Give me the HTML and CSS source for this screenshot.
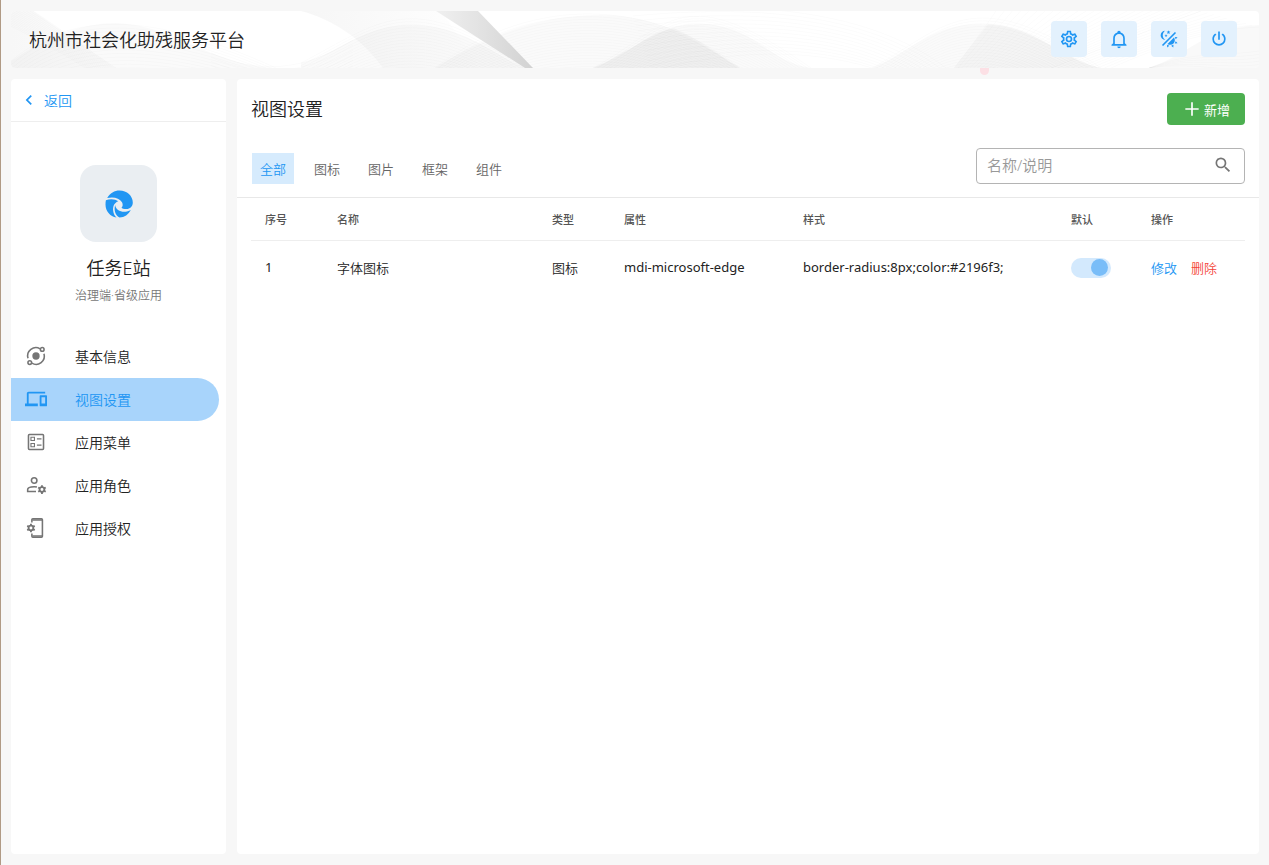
FILE: index.html
```html
<!DOCTYPE html>
<html lang="zh-CN">
<head>
<meta charset="utf-8">
<title>杭州市社会化助残服务平台</title>
<link rel="stylesheet" href="styles.css">
</head>
<body>
<div class="app">
  <header class="topbar">
    <svg class="waves" viewBox="0 0 1248 57" preserveAspectRatio="xMidYMid slice" aria-hidden="true">
      <defs>
        <linearGradient id="beam" x1="0" y1="0" x2="1" y2="0"><stop offset="0" stop-color="#f0f0f0"/><stop offset="1" stop-color="#d2d2d2"/></linearGradient>
        <linearGradient id="fade" x1="0" y1="0" x2="1" y2="0"><stop offset="0" stop-color="#f6f6f6"/><stop offset="1" stop-color="#fff"/></linearGradient>
        <linearGradient id="left" x1="0" y1="0" x2="1" y2="0"><stop offset="0" stop-color="#f7f7f7"/><stop offset="1" stop-color="#fdfdfd"/></linearGradient>
      </defs>
      <path fill="url(#left)" d="M0 0H22L105 57H0Z"/>
      <path fill="url(#fade)" d="M290 0C320 8 350 26 372 57H470L430 0Z"/>
      <g class="fills">
        <path d="M0 50Q55 12 105 12C165 14 200 55 265 57H0Z"/>
        <path d="M290 52C325 44 350 14 400 14C455 14 480 44 516 57H290Z"/>
        <path d="M424 57C480 22 530 4 590 4C650 4 690 32 729 57Z"/>
        <path d="M582 57C630 38 640 13 690 13C745 14 755 50 800 57Z"/>
        <path class="deep" d="M582 57C620 40 635 24 663 17C690 29 708 44 729 57Z"/>
        <path d="M861 57C905 38 920 13 970 13C1025 14 1050 48 1090 57Z"/>
        <path class="deep" d="M943 57L977 13C1025 15 1050 48 1090 57Z"/>
        <path class="deep" d="M1138 57C1175 45 1195 16 1248 14V57Z"/>
      </g>
      <g id="wave-lines" class="lines"></g>
      <path fill="url(#beam)" d="M425 0H467L522 57H514Z"/>
    </svg>
    <h1 class="brand">杭州市社会化助残服务平台</h1>
    <div class="tools">
      <button class="tool" type="button" aria-label="设置"><svg viewBox="0 0 24 24"><path d="M12,8A4,4 0 0,1 16,12A4,4 0 0,1 12,16A4,4 0 0,1 8,12A4,4 0 0,1 12,8M12,10A2,2 0 0,0 10,12A2,2 0 0,0 12,14A2,2 0 0,0 14,12A2,2 0 0,0 12,10M10,22C9.75,22 9.54,21.82 9.5,21.58L9.13,18.93C8.5,18.68 7.96,18.34 7.44,17.94L4.95,18.95C4.73,19.03 4.46,18.95 4.34,18.73L2.34,15.27C2.21,15.05 2.27,14.78 2.46,14.63L4.57,12.97L4.5,12L4.57,11L2.46,9.37C2.27,9.22 2.21,8.95 2.34,8.73L4.34,5.27C4.46,5.05 4.73,4.96 4.95,5.05L7.44,6.05C7.96,5.66 8.5,5.32 9.13,5.07L9.5,2.42C9.54,2.18 9.75,2 10,2H14C14.25,2 14.46,2.18 14.5,2.42L14.87,5.07C15.5,5.32 16.04,5.66 16.56,6.05L19.05,5.05C19.27,4.96 19.54,5.05 19.66,5.27L21.66,8.73C21.79,8.95 21.73,9.22 21.54,9.37L19.43,11L19.5,12L19.43,13L21.54,14.63C21.73,14.78 21.79,15.05 21.66,15.27L19.66,18.73C19.54,18.95 19.27,19.04 19.05,18.95L16.56,17.95C16.04,18.34 15.5,18.68 14.87,18.93L14.5,21.58C14.46,21.82 14.25,22 14,22H10M11.25,4L10.88,6.61C9.68,6.86 8.62,7.5 7.85,8.39L5.44,7.35L4.69,8.65L6.8,10.2C6.4,11.37 6.4,12.64 6.8,13.8L4.68,15.36L5.43,16.66L7.86,15.62C8.63,16.5 9.68,17.14 10.87,17.38L11.24,20H12.76L13.13,17.39C14.32,17.14 15.37,16.5 16.14,15.62L18.57,16.66L19.32,15.36L17.2,13.81C17.6,12.64 17.6,11.37 17.2,10.2L19.31,8.65L18.56,7.35L16.15,8.39C15.38,7.5 14.32,6.86 13.12,6.62L12.75,4H11.25Z"/></svg></button>
      <button class="tool" type="button" aria-label="通知"><svg viewBox="0 0 24 24"><path d="M10 21H14C14 22.1 13.1 23 12 23S10 22.1 10 21M21 19V20H3V19L5 17V11C5 7.9 7 5.2 10 4.3V4C10 2.9 10.9 2 12 2S14 2.9 14 4V4.3C17 5.2 19 7.9 19 11V17L21 19M17 11C17 8.2 14.8 6 12 6S7 8.2 7 11V18H17V11Z"/></svg></button>
      <button class="tool" type="button" aria-label="主题"><svg viewBox="0 0 24 24"><path d="M7.5,2C5.71,3.15 4.5,5.18 4.5,7.5C4.5,9.82 5.71,11.85 7.53,13C4.46,13 2,10.54 2,7.5A5.5,5.5 0 0,1 7.5,2M19.07,3.5L20.5,4.93L4.93,20.5L3.5,19.07L19.07,3.5M12.89,5.93L11.41,5L9.97,6L10.39,4.3L9,3.24L10.75,3.12L11.33,1.47L12,3.1L13.73,3.13L12.38,4.26L12.89,5.93M9.59,9.54L8.43,8.81L7.31,9.59L7.65,8.27L6.56,7.44L7.92,7.35L8.37,6.06L8.88,7.33L10.24,7.36L9.19,8.23L9.59,9.54M19,13.5A5.5,5.5 0 0,1 13.5,19C12.28,19 11.15,18.6 10.24,17.93L17.93,10.24C18.6,11.15 19,12.28 19,13.5M14.6,20.08L17.37,18.93L17.13,22.28L14.6,20.08M18.93,17.38L20.08,14.61L22.28,17.15L18.93,17.38M20.08,12.42L18.94,9.64L22.28,9.88L20.08,12.42M9.63,18.93L12.4,20.08L9.87,22.27L9.63,18.93Z"/></svg></button>
      <button class="tool" type="button" aria-label="退出"><svg viewBox="0 0 24 24"><path d="M16.56,5.44L15.11,6.89C16.84,7.94 18,9.83 18,12A6,6 0 0,1 12,18A6,6 0 0,1 6,12C6,9.83 7.16,7.94 8.88,6.88L7.44,5.44C5.36,6.88 4,9.28 4,12A8,8 0 0,0 12,20A8,8 0 0,0 20,12C20,9.28 18.64,6.88 16.56,5.44M13,3H11V13H13"/></svg></button>
    </div>
    <span class="marker"></span>
  </header>

  <div class="columns">
    <aside class="sidebar">
      <a class="back" href="#"><svg viewBox="0 0 24 24"><path d="M15.41,16.58L10.83,12L15.41,7.41L14,6L8,12L14,18L15.41,16.58Z"/></svg>返回</a>
      <section class="profile">
        <div class="logo">
          <svg viewBox="0 0 28 28"><path d="M2.200 8C5 3 9.500 .5 14.500 .5C22 .5 27.800 6 27.800 12.500C27.800 16.500 25 19 21.500 19C18.800 19 17 18.500 16.500 17.700C18 16.500 18 14 17 12.300C14.500 8 8.500 6.500 2.200 8ZM.9 10.200C5 8.600 10.500 8.900 13.300 11.300C9.500 12.500 7.500 16.500 8.200 21C8.600 24 9.700 26 11.500 27.500C5 26.500 .5 21 .5 14.500C.5 13 .6 11.500 .9 10.200ZM10.200 15C10.500 19.500 15.500 22.300 20.500 21.700C22.500 21.500 24.500 20.700 25.800 20C23.500 24.500 19.500 27.500 14.500 27.500C10 25.500 8.800 19.500 10.200 15Z"/></svg>
        </div>
        <h2 class="app-name">任务E站</h2>
        <p class="app-kind">治理端·省级应用</p>
      </section>
      <nav class="menu">
        <a class="item" href="#"><svg viewBox="0 0 24 24"><circle cx="12" cy="12" r="4"/><g class="stroke"><path d="M16.500 4.200A9 9 0 0 0 3.300 14.500M7.500 19.800A9 9 0 0 0 20.700 9.500"/><circle cx="18.800" cy="4.800" r="2"/><circle cx="5.200" cy="19.200" r="2"/></g></svg>基本信息</a>
        <a class="item active" href="#" aria-current="page"><svg viewBox="0 0 24 24"><path d="M4 6h18V4H4c-1.100 0-2 .9-2 2v11H0v3h14v-3H4V6zm19 2h-6c-.55 0-1 .45-1 1v10c0 .55.45 1 1 1h6c.55 0 1-.45 1-1V9c0-.55-.45-1-1-1zm-1 9h-4v-7h4v7z"/></svg>视图设置</a>
        <a class="item" href="#"><svg viewBox="0 0 24 24"><g class="stroke"><rect x="3.800" y="3.800" width="16.400" height="16.400" rx="1"/></g><g class="thin"><path d="M6.500 6.800h3.800v3.600h-3.800zM6.500 13.600h3.800v3.600h-3.800zM13 8.600h5M13 15.400h5"/></g></svg>应用菜单</a>
        <a class="item" href="#"><svg viewBox="0 0 24 24"><g class="stroke"><circle cx="10" cy="7" r="3"/><path d="M12 19H2.900V17C2.900 14.500 7.500 13.900 10 13.900Q11.500 13.900 13 14.300"/></g><g class="gear"><circle cx="18.500" cy="17" r="2.600"/><path d="M18.500 12.300v2M18.500 19.700v2M14.400 14.700l1.800 1M20.800 18.300l1.800 1M14.400 19.300l1.800-1M20.800 15.700l1.800-1"/></g></svg>应用角色</a>
        <a class="item" href="#"><svg viewBox="0 0 24 24"><g class="stroke"><path d="M7.500 6V3Q7.500 2 8.500 2H18Q19 2 19 3V21Q19 22 18 22H8.500Q7.500 22 7.500 21V18"/><path d="M8 3.300H19M8 20.700H19"/></g><g class="gear"><circle cx="6.500" cy="12" r="2.600"/><path d="M6.500 7.300v2M6.500 14.700v2M2.400 9.700l1.800 1M8.800 13.300l1.800 1M2.400 14.300l1.800-1M8.800 10.700l1.800-1"/></g></svg>应用授权</a>
      </nav>
    </aside>

    <main class="panel">
      <div class="panel-head">
        <h2 class="title">视图设置</h2>
        <button class="add" type="button"><svg viewBox="0 0 24 24"><path d="M20,13H13V20H11V13H4V11H11V4H13V11H20V13Z"/></svg>新增</button>
      </div>
      <div class="filters">
        <div class="tabs">
          <button class="tab selected" type="button">全部</button>
          <button class="tab" type="button">图标</button>
          <button class="tab" type="button">图片</button>
          <button class="tab" type="button">框架</button>
          <button class="tab" type="button">组件</button>
        </div>
        <label class="search">
          <input type="text" placeholder="名称/说明" aria-label="名称/说明">
          <svg viewBox="0 0 24 24"><path d="M9.500,3A6.500,6.500 0 0,1 16,9.500C16,11.110 15.410,12.590 14.440,13.730L14.710,14H15.500L20.500,19L19,20.500L14,15.500V14.710L13.730,14.440C12.590,15.410 11.110,16 9.500,16A6.500,6.500 0 0,1 3,9.500A6.500,6.500 0 0,1 9.500,3M9.500,5C7,5 5,7 5,9.500C5,12 7,14 9.500,14C12,14 14,12 14,9.500C14,7 12,5 9.500,5Z"/></svg>
        </label>
      </div>
      <div class="table-wrap">
        <table class="grid">
          <colgroup><col class="c-no"><col class="c-name"><col class="c-type"><col class="c-attr"><col class="c-style"><col class="c-default"><col class="c-ops"></colgroup>
          <thead><tr><th>序号</th><th>名称</th><th>类型</th><th>属性</th><th>样式</th><th>默认</th><th>操作</th></tr></thead>
          <tbody><tr>
            <td class="latin">1</td><td>字体图标</td><td>图标</td><td class="latin">mdi-microsoft-edge</td><td class="latin">border-radius:8px;color:#2196f3;</td>
            <td><input class="switch" type="checkbox" role="switch" aria-label="默认" checked></td>
            <td><span class="ops"><a class="edit" href="#">修改</a><a class="delete" href="#">删除</a></span></td>
          </tr></tbody>
        </table>
      </div>
    </main>
  </div>
</div>
<script src="waves.js"></script>
</body>
</html>
```
FILE: styles.css
```css
* { box-sizing: border-box; }
body {
  margin: 0;
  background: #f7f7f7;
  color: #222;
  font-family: "Noto Sans", "Noto Sans CJK SC", sans-serif;
  font-size: 13px;
  font-weight: 350;
}
h1, h2, p { margin: 0; font-weight: 350; }
a { text-decoration: none; color: inherit; }
button { border: 0; font: inherit; cursor: pointer; }
svg { fill: currentColor; flex: none; }

.app {
  display: flex;
  flex-direction: column;
  gap: 11px;
  min-height: 100vh;
  padding: 11px 10px;
  border-left: 1px solid #b09a85;
}

.topbar {
  position: relative;
  display: flex;
  align-items: center;
  justify-content: space-between;
  min-height: 57px;
  padding: 0 22px 0 18px;
  border-radius: 4px;
  background: #fff;
}
.waves { position: absolute; inset: 0; width: 100%; height: 100%; border-radius: 4px; }
.fills path { fill: #000; fill-opacity: .02; }
.fills .deep { fill-opacity: .022; }
.lines { fill: none; stroke: #000; stroke-opacity: .028; stroke-width: .7; }
.brand { position: relative; font-size: 18px; line-height: 26px; }
.tools { position: relative; display: flex; gap: 14px; padding-bottom: 1px; }
.tool {
  display: grid;
  place-items: center;
  width: 36px;
  height: 36px;
  padding: 0;
  border-radius: 4px;
  background: #e3f1fd;
  color: #2196f3;
}
.tool svg { width: 20px; height: 20px; }
.marker {
  position: absolute;
  top: 100%;
  right: 270px;
  width: 9px;
  height: 7px;
  border-radius: 0 0 5px 5px;
  background: #fce0e5;
}

.columns { display: flex; flex: 1; gap: 11px; }
.sidebar { flex: none; width: 215px; border-radius: 4px; background: #fff; }
.back {
  display: flex;
  align-items: center;
  gap: 5px;
  height: 43px;
  padding-left: 8px;
  border-bottom: 1px solid #eee;
  color: #2196f3;
  font-size: 14px;
}
.back svg { width: 20px; height: 20px; }
.profile { display: flex; flex-direction: column; align-items: center; padding: 43px 0 30px; }
.logo {
  display: grid;
  place-items: center;
  width: 77px;
  height: 77px;
  border-radius: 16px;
  background: #eaeef2;
  color: #2196f3;
}
.logo svg { width: 28px; height: 28px; }
.app-name { margin-top: 12px; font-size: 18px; line-height: 28px; }
.app-kind { margin-top: 5px; font-size: 12px; line-height: 18px; color: #777; }
.item {
  display: flex;
  align-items: center;
  gap: 28px;
  height: 43px;
  margin-right: 7px;
  padding: 0 0 2px 14px;
  border-radius: 0 22px 22px 0;
  font-size: 14px;
}
.item svg { width: 22px; height: 22px; color: #757575; }
.item.active { background: #a8d4fb; color: #2196f3; }
.item.active svg { color: inherit; }
.stroke { fill: none; stroke: currentColor; stroke-width: 1.7; }
.thin { fill: none; stroke: currentColor; stroke-width: 1.2; }
.gear { fill: none; stroke: currentColor; stroke-width: 2; }

.panel { flex: 1; min-width: 0; border-radius: 4px; background: #fff; }
.panel-head {
  display: flex;
  align-items: center;
  justify-content: space-between;
  padding: 14px 14px 0;
}
.title { font-size: 18px; line-height: 32px; }
.add {
  display: flex;
  align-items: center;
  gap: 2px;
  height: 32px;
  padding: 0 15px;
  border-radius: 4px;
  background: #4caf50;
  color: #fff;
  font-size: 13px;
  font-weight: 400;
}
.add svg { width: 20px; height: 20px; }
.filters {
  display: flex;
  align-items: center;
  justify-content: space-between;
  padding: 23px 14px 13px;
  border-bottom: 1px solid #e8e8e8;
}
.tabs { display: flex; gap: 12px; padding: 4px 1px 0; }
.tab { height: 31px; padding: 0 8px; background: none; color: #666; font-size: 13px; }
.tab.selected { background: #d6ebfd; color: #2196f3; }
.search {
  display: flex;
  align-items: center;
  width: 269px;
  height: 36px;
  padding: 0 11px 2px 10px;
  border: 1px solid #b4b4b4;
  border-radius: 4px;
  color: #757575;
}
.search input { flex: 1; min-width: 0; padding: 0; border: 0; outline: 0; background: none; font: inherit; font-size: 15px; }
.search input::placeholder { color: #999; opacity: 1; }
.search svg { width: 20px; height: 20px; }

.table-wrap { padding: 0 14px; }
.grid { width: 100%; table-layout: fixed; border-collapse: collapse; text-align: left; }
.grid th, .grid td { padding: 0 14px; }
.grid th { height: 42px; border-bottom: 1px solid #eee; font-size: 11px; font-weight: 500; color: #555; }
.grid td { height: 54px; font-size: 13px; white-space: nowrap; }
.grid .latin { font-weight: 400; }
.c-no, .c-type { width: 72px; }
.c-name { width: 215px; }
.c-attr { width: 179px; }
.c-style { width: 268px; }
.c-default { width: 80px; }
.switch {
  appearance: none;
  display: inline-grid;
  align-items: center;
  justify-items: end;
  width: 40px;
  height: 20px;
  margin: 0;
  padding: 0 3px;
  border-radius: 10px;
  background: #d3e9fd;
  vertical-align: middle;
}
.switch::before { content: ""; width: 17px; height: 17px; border-radius: 50%; background: #79bdf8; }
.switch:not(:checked) { justify-items: start; }
.ops { display: flex; gap: 14px; }
.edit { color: #2196f3; }
.delete { color: #f44336; }
```
FILE: waves.js
```js
const group = document.getElementById("wave-lines");

// Each family blends from one cubic curve to another: [x0,y0, x1,y1, x2,y2, x3,y3].
const families = [
  [[-30, 0, 20, 25, 60, 45, 100, 75], [22, 0, 45, 14, 75, 38, 105, 57], 16],
  [[0, 50, 60, 0, 140, 0, 265, 57], [0, 100, 60, 50, 140, 50, 265, 85], 14],
  [[200, 42, 245, 62, 290, 62, 342, 29], [200, 80, 245, 95, 290, 95, 342, 75], 10],
  [[290, 52, 370, 10, 400, -24, 516, 57], [290, 100, 370, 60, 400, 40, 516, 100], 19],
  [[424, 57, 510, -10, 630, -20, 729, 57], [424, 110, 510, 50, 630, 40, 729, 110], 22],
  [[582, 57, 660, 14, 670, -34, 800, 57], [582, 110, 660, 64, 670, 20, 800, 110], 22],
  [[620, 0, 720, -8, 850, -8, 935, 57], [640, 60, 720, 38, 800, 38, 861, 57], 13],
  [[861, 57, 930, 20, 960, -34, 1090, 57], [861, 110, 930, 60, 960, 30, 1090, 110], 20],
  [[985, 0, 970, 22, 955, 42, 943, 57], [1190, 0, 1130, 22, 1080, 42, 1040, 57], 26],
  [[1190, 0, 1130, 22, 1080, 42, 1040, 57], [1248, 16, 1200, 18, 1150, 35, 1100, 57], 10],
  [[1138, 57, 1180, 40, 1215, 45, 1248, 40], [1138, 57, 1180, 50, 1215, 62, 1248, 57], 6]
];

for (const [from, to, count] of families) {
  for (let i = 0; i < count; i++) {
    const p = from.map((v, k) => v + (to[k] - v) * i / (count - 1));
    const path = document.createElementNS("http://www.w3.org/2000/svg", "path");
    path.setAttribute("d", `M${p[0]} ${p[1]}C${p.slice(2).join(" ")}`);
    group.append(path);
  }
}
```
